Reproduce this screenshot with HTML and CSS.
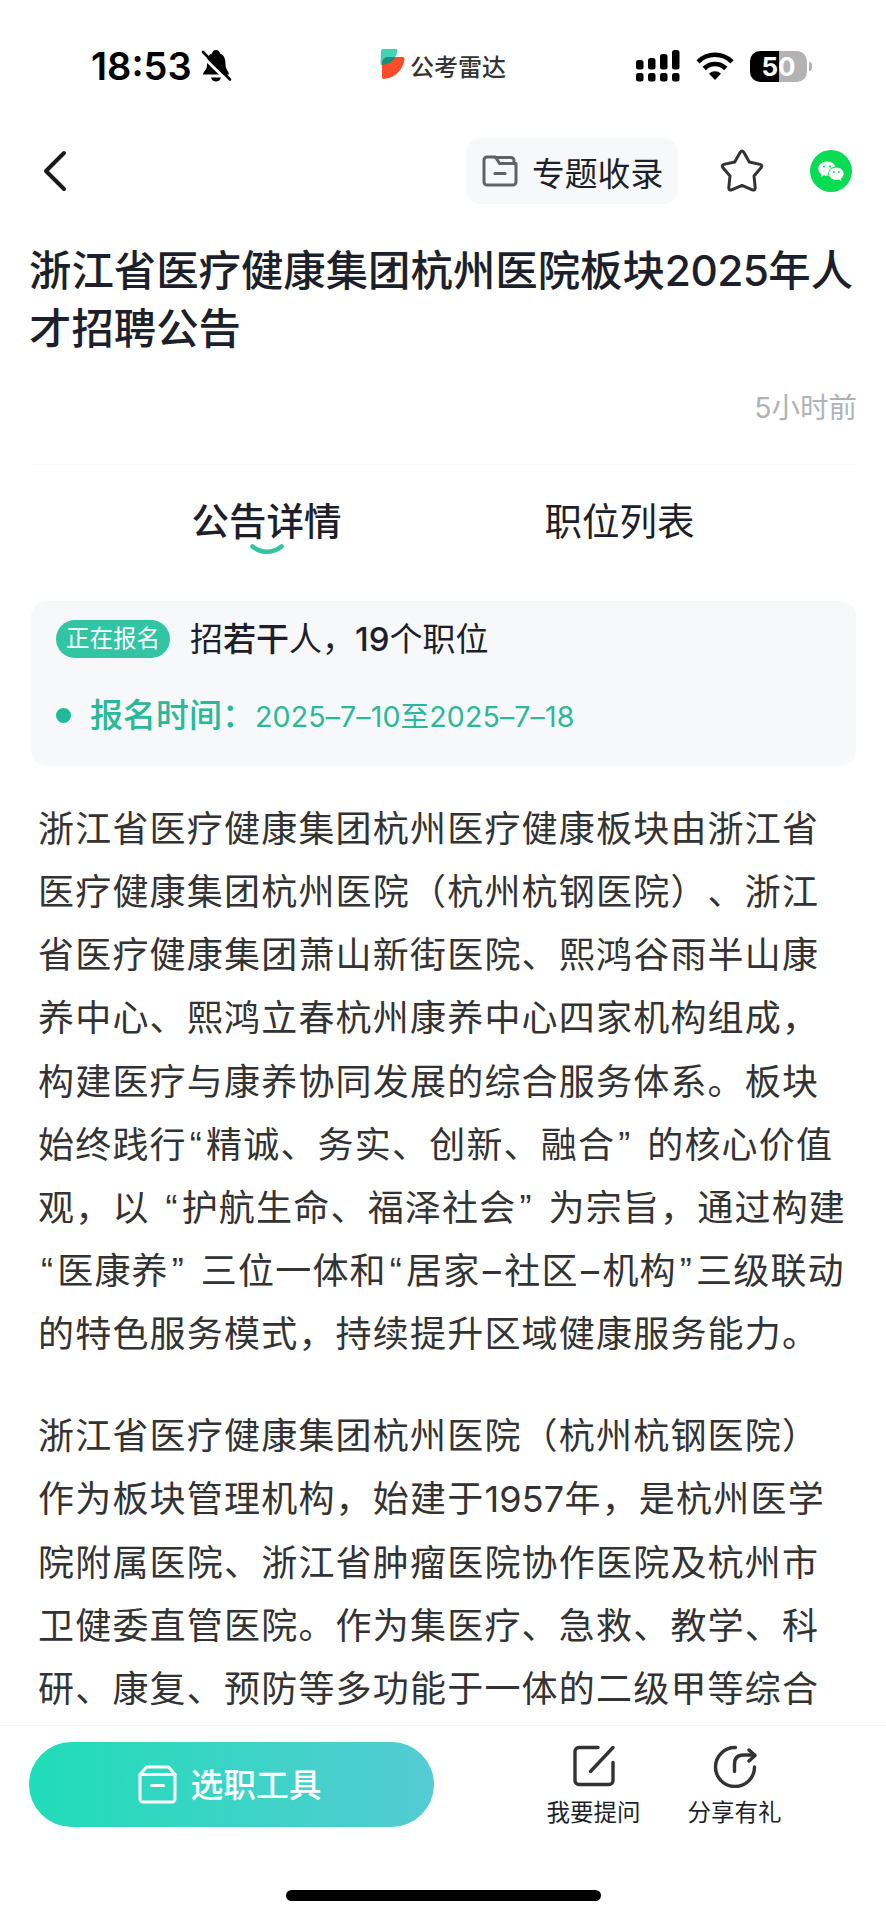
FILE: index.html
```html
<!DOCTYPE html>
<html lang="zh-CN">
<head>
  <meta charset="UTF-8">
  <meta name="viewport" content="width=device-width, initial-scale=1.0">
  <title>公考雷达</title>
  <link rel="stylesheet" href="styles.css">
</head>
<body>
  <div class="app">
    <div class="status-bar">
      <div class="status-time">
        <span>18:53</span>
        <svg class="bell" width="32" height="34" viewBox="0 0 32 34">
          <path d="M3 25.500c0-3 4-4.500 4-9C7 8 9 5.500 12 4.500 12.500 2 14 1 16 1s3.500 1 4 3.500c4 1.500 5.500 5 5.500 11 0 5 3.500 7 3.500 10z" fill="#000"/>
          <path d="M11 28.500h10c-.8 2.500-2.500 4-5 4s-4.200-1.500-5-4z" fill="#000"/>
          <path d="M1 6l27 26.500" stroke="#fff" stroke-width="3"/>
          <path d="M3 3l27 27.500" stroke="#000" stroke-width="2.600" stroke-linecap="round"/>
        </svg>
      </div>
      <div class="brand">
        <svg width="25" height="32" viewBox="0 0 25 32">
          <path d="M3 1h12.500c1.500 0 2 1 1.800 2.300C16.500 10 11 16 2 17c-1 0-1.500-.5-1.500-1.500L1 3c0-1.200.8-2 2-2z" fill="#43d3b4"/>
          <path d="M8 9h14.500c1.500 0 2.300 1 2 2.500C23 22 15 30 4 31c-1.300.1-2-.7-2-2V16c0-4 2.500-7 6-7z" fill="#fa4b2b"/>
          <path d="M8 9h7.500C13 13.500 8.500 16.200 2 17v-1c0-4 2.500-7 6-7z" fill="#16917f"/>
        </svg>
        <span>公考雷达</span>
      </div>
      <div class="status-icons">
        <svg width="44" height="32" viewBox="0 0 44 32">
          <rect x="0" y="10" width="7.500" height="9.500" rx="2.500"/>
          <rect x="12" y="8" width="7.500" height="11.500" rx="2.500"/>
          <rect x="24" y="4" width="7.500" height="15.500" rx="2.500"/>
          <rect x="36" y="0" width="7.500" height="19.500" rx="2.500"/>
          <rect x="0" y="23" width="7.500" height="8.500" rx="2.500"/>
          <rect x="12" y="23" width="7.500" height="8.500" rx="2.500"/>
          <rect x="24" y="23" width="7.500" height="8.500" rx="2.500"/>
          <rect x="36" y="23" width="7.500" height="8.500" rx="2.500"/>
        </svg>
        <svg class="wifi" width="38" height="28" viewBox="0 0 38 28">
          <path d="M2 9.800C11.500.4 26.500.4 36 9.800" fill="none" stroke="#000" stroke-width="4.600"/>
          <path d="M8.200 16.500c6-6 15.600-6 21.600 0" fill="none" stroke="#000" stroke-width="4.600"/>
          <path d="M19 28l-6-6.200c3.300-3.300 8.700-3.300 12 0z"/>
        </svg>
        <div class="battery"><span>50</span></div>
        <i class="battery-nub"></i>
      </div>
    </div>

    <div class="nav-bar">
      <svg class="back" width="24" height="42" viewBox="0 0 24 42">
        <path d="M21 3L3 21l18 18" fill="none" stroke="#1a1a1a" stroke-width="4" stroke-linecap="round" stroke-linejoin="round"/>
      </svg>
      <div class="collect">
        <svg width="36" height="32" viewBox="0 0 36 32" fill="none" stroke="#606266" stroke-width="3" stroke-linejoin="round" stroke-linecap="round">
          <path d="M5 2h8.500l4 6.500H34V27a3 3 0 0 1-3 3H5a3 3 0 0 1-3-3V5a3 3 0 0 1 3-3z"/>
          <path d="M13.500 2.500H29a3 3 0 0 1 3 3v3"/>
          <path d="M13 18.500h10"/>
        </svg>
        <span>专题收录</span>
      </div>
      <svg class="star" width="44" height="43" viewBox="0 0 44 43">
        <path d="M20.200 3.300q1.800-2.500 3.600 0l5.500 9.700 10.700 2.400q2.700.8 1.200 3.200l-7.200 8.300 1.200 11.800q0 3-2.900 2.200L22 36.400l-10.300 4.500q-2.900.8-2.900-2.200L10 26.900l-7.200-8.300q-1.500-2.400 1.200-3.200L14.700 13z" fill="none" stroke="#333" stroke-width="3" stroke-linejoin="round"/>
      </svg>
      <svg class="wechat" width="42" height="42" viewBox="0 0 42 42">
        <circle cx="21" cy="21" r="21" fill="#07dc52"/>
        <path d="M17 11.500c-5 0-8.700 3.200-8.700 7.200 0 2.300 1.200 4.200 3.200 5.500l-.8 2.800 3.200-1.700c1 .3 2 .4 3.100.4 5 0 8.800-3 8.800-7s-3.800-7.200-8.800-7.200z" fill="#fff"/>
        <ellipse cx="26.300" cy="23.800" rx="8.200" ry="7.200" fill="#07dc52"/>
        <path d="M26.300 17.500c-4.200 0-7.300 2.800-7.300 6.200s3.100 6.200 7.300 6.200c.8 0 1.600-.1 2.400-.3l2.800 1.500-.7-2.500c1.800-1.200 2.800-2.900 2.800-4.900 0-3.400-3.100-6.200-7.300-6.200z" fill="#fff"/>
        <g fill="#07dc52">
          <circle cx="14" cy="16.500" r="1.100"/><circle cx="20" cy="16.500" r="1.100"/>
          <circle cx="23.800" cy="21.900" r="1"/><circle cx="28.800" cy="21.900" r="1"/>
        </g>
      </svg>
    </div>

    <div class="content">
      <h1 class="title">浙江省医疗健康集团杭州医院板块<span class="num">2025</span>年人<br>才招聘公告</h1>
      <div class="time">5小时前</div>

      <div class="tabs">
        <div class="tab active">
          <span>公告详情</span>
          <svg class="smile" width="34" height="11" viewBox="0 0 34 11">
            <path d="M2.500 2.500c8.500 7 20.500 7 29 0" fill="none" stroke="#32c4a3" stroke-width="4.600" stroke-linecap="round"/>
          </svg>
        </div>
        <div class="tab"><span>职位列表</span></div>
      </div>

      <div class="summary">
        <div class="summary-row">
          <span class="badge">正在报名</span>
          <span class="count">招<b>若干</b>人，<b>19</b>个职位</span>
        </div>
        <div class="summary-row signup">
          <i class="dot"></i>
          <span class="signup-label">报名时间：</span>
          <span class="signup-date">2025–7–10至2025–7–18</span>
        </div>
      </div>

      <div class="article">
        <p>浙江省医疗健康集团杭州医疗健康板块由浙江省<br>
        医疗健康集团杭州医院（杭州杭钢医院）、浙江<br>
        省医疗健康集团萧山新街医院、熙鸿谷雨半山康<br>
        养中心、熙鸿立春杭州康养中心四家机构组成，<br>
        构建医疗与康养协同发展的综合服务体系。板块<br>
        始终践行<span class="quote">“</span>精诚、务实、创新、融合<span class="quote">”</span> 的核心价值<br>
        观，以 <span class="quote">“</span>护航生命、福泽社会<span class="quote">”</span> 为宗旨，通过构建<br>
        <span class="quote">“</span>医康养<span class="quote">”</span> 三位一体和<span class="quote">“</span>居家<span class="dash">–</span>社区<span class="dash">–</span>机构<span class="quote">”</span>三级联动<br>
        的特色服务模式，持续提升区域健康服务能力。</p>
        <p>浙江省医疗健康集团杭州医院（杭州杭钢医院）<br>
        作为板块管理机构，始建于<span class="num">1957</span>年，是杭州医学<br>
        院附属医院、浙江省肿瘤医院协作医院及杭州市<br>
        卫健委直管医院。作为集医疗、急救、教学、科<br>
        研、康复、预防等多功能于一体的二级甲等综合</p>
      </div>
    </div>

    <div class="bottom">
      <div class="toolbar">
        <div class="tool-btn">
          <svg width="39" height="39" viewBox="0 0 39 39" fill="none" stroke="#fff" stroke-width="3" stroke-linejoin="round" stroke-linecap="round">
            <path d="M2 9.500h35V34a3 3 0 0 1-3 3H5a3 3 0 0 1-3-3z"/>
            <path d="M2 9.500L8.500 2h22L37 9.500"/>
            <path d="M13.500 20.500h12"/>
          </svg>
          <span>选职工具</span>
        </div>
        <div class="action">
          <svg width="44" height="44" viewBox="0 0 44 44" fill="none" stroke="#333" stroke-width="3.400" stroke-linecap="round" stroke-linejoin="round">
            <path d="M26 3.500H7a4 4 0 0 0-4 4v29a4 4 0 0 0 4 4h30a4 4 0 0 0 4-4V18.500"/>
            <path d="M18.500 27.500L41 3.500"/>
          </svg>
          <span>我要提问</span>
        </div>
        <div class="action">
          <svg width="44" height="44" viewBox="0 0 44 44" fill="none" stroke="#333" stroke-width="3.400" stroke-linecap="round" stroke-linejoin="round">
            <path d="M22.500 3.500A19.500 19.500 0 1 0 41.500 23"/>
            <path d="M21.500 27.500V20c0-6 3.500-9 9-9h11"/>
            <path d="M36 6l6 5.500-6 5.500"/>
          </svg>
          <span>分享有礼</span>
        </div>
      </div>
      <div class="home-indicator"></div>
    </div>
  </div>
</body>
</html>
```

FILE: styles.css
```css
* {
  box-sizing: border-box;
}

body {
  margin: 0;
  background: #fff;
  font-family: Inter, "Noto Sans CJK SC", sans-serif;
  color: #1d1f2a;
  text-spacing-trim: space-all;
}

svg {
  display: block;
  flex-shrink: 0;
}

.app {
  width: 886px;
  height: 1920px;
  display: flex;
  flex-direction: column;
  overflow: hidden;
  white-space: nowrap;
}

/* status bar */
.status-bar {
  height: 132px;
  display: grid;
  grid-template-columns: 380px 256px 1fr;
  color: #000;
}

.status-time {
  display: flex;
  align-items: center;
  height: 132px;
  padding-left: 91px;
  font-size: 38px;
  font-weight: 600;
}

.bell {
  margin-left: 8px;
}

.brand {
  display: flex;
  align-items: center;
  height: 128px;
  gap: 5px;
  font-size: 24px;
  font-weight: 500;
  color: #333;
}

.brand span {
  margin-top: 2px;
}

.status-icons {
  display: flex;
  align-items: center;
  height: 132px;
}

.wifi {
  margin-left: 16px;
}

.battery {
  width: 57px;
  height: 31px;
  margin-left: 16px;
  border-radius: 10px;
  background: linear-gradient(90deg, #000 51%, #b3b3b3 51%);
  color: #fff;
  font-size: 26px;
  font-weight: 700;
  line-height: 31px;
  text-align: center;
}

.battery-nub {
  width: 3px;
  height: 9px;
  margin-left: 2px;
  border-radius: 0 4px 4px 0;
  background: #b3b3b3;
}

/* nav bar */
.nav-bar {
  height: 78px;
  display: flex;
  align-items: center;
  padding: 0 34px 0 43px;
}

.collect {
  display: flex;
  align-items: center;
  width: 212px;
  height: 66px;
  margin-left: auto;
  padding-left: 16px;
  border-radius: 14px;
  background: #f6f8fa;
  font-size: 32.8px;
}

.collect span {
  margin-left: 14px;
}

.star {
  margin: -2px 46px 0 42px;
}

/* content */
.content {
  flex: 1;
  min-height: 0;
  overflow: hidden;
  padding: 31.5px 30px 0;
}

.title {
  margin: 0 0 0 -1px;
  font-size: 42.4px;
  font-weight: 500;
  line-height: 58.7px;
}

.title .num {
  letter-spacing: -0.6px;
}

.time {
  margin-top: 29px;
  margin-right: -1px;
  font-size: 28.5px;
  line-height: 40px;
  text-align: right;
  color: #b0b2ba;
}

.tabs {
  display: flex;
  height: 137px;
  margin-top: 36.5px;
  padding: 0 31px 0 60px;
  border-top: 1px solid #fafafa;
}

.tab {
  display: flex;
  flex-direction: column;
  align-items: center;
  width: 353px;
  padding-top: 32px;
  font-size: 37.5px;
  line-height: 50px;
}

.tab.active {
  font-weight: 500;
}

.smile {
  margin-top: -3px;
}

.summary {
  width: 825px;
  height: 165px;
  margin-left: 1px;
  padding: 13px 25px;
  border-radius: 16px;
  background: #f6f8fa;
}

.summary-row {
  display: flex;
  align-items: center;
  height: 50px;
}

.badge {
  width: 114px;
  height: 38px;
  border-radius: 19px;
  background: #32c4a3;
  color: #fff;
  font-size: 23.5px;
  line-height: 37px;
  text-align: center;
}

.count {
  margin: 0 0 4px 20px;
  font-size: 33px;
}

.count b {
  font-weight: 500;
}

.signup {
  margin-top: 26px;
  color: #29b998;
}

.dot {
  width: 15px;
  height: 15px;
  border-radius: 50%;
  background: #1fba98;
}

.signup-label {
  width: 165px;
  margin: 0 0 4px 19px;
  font-size: 33px;
  font-weight: 500;
}

.signup-date {
  margin-bottom: 2px;
  font-size: 28.5px;
  letter-spacing: 0.15px;
}

.article {
  padding: 31.5px 0 0 8px;
  font-size: 36px;
  line-height: 63.15px;
  letter-spacing: 1.2px;
  word-spacing: 1.5px;
  color: #333;
}

.article p {
  margin: 0 0 39px;
}

.article .num {
  letter-spacing: 0.2px;
}

.quote {
  display: inline-block;
  width: 19.2px;
  font-family: "Liberation Sans", sans-serif;
  line-height: 1;
  text-align: center;
}

.dash {
  padding: 0 2.3px;
}

/* bottom bar */
.bottom {
  height: 195px;
  border-top: 1px solid #f2f2f2;
  background: #fff;
}

.toolbar {
  display: flex;
  height: 164px;
  padding: 16px 0 0 29px;
}

.tool-btn {
  display: flex;
  align-items: center;
  justify-content: center;
  gap: 13px;
  width: 405px;
  height: 85px;
  margin-right: 89px;
  padding-right: 3px;
  border-radius: 43px;
  background: linear-gradient(90deg, #20ddb8, #54cbd3);
  color: #fff;
  font-size: 32.8px;
  font-weight: 500;
}

.tool-btn span {
  margin-bottom: 4px;
}

.action {
  display: flex;
  flex-direction: column;
  align-items: center;
  width: 141px;
  padding-top: 2px;
  font-size: 23.5px;
  line-height: 32px;
}

.action span {
  margin-top: 9px;
}

.home-indicator {
  width: 315px;
  height: 11px;
  margin: 0 auto;
  border-radius: 6px;
  background: #000;
}
```
